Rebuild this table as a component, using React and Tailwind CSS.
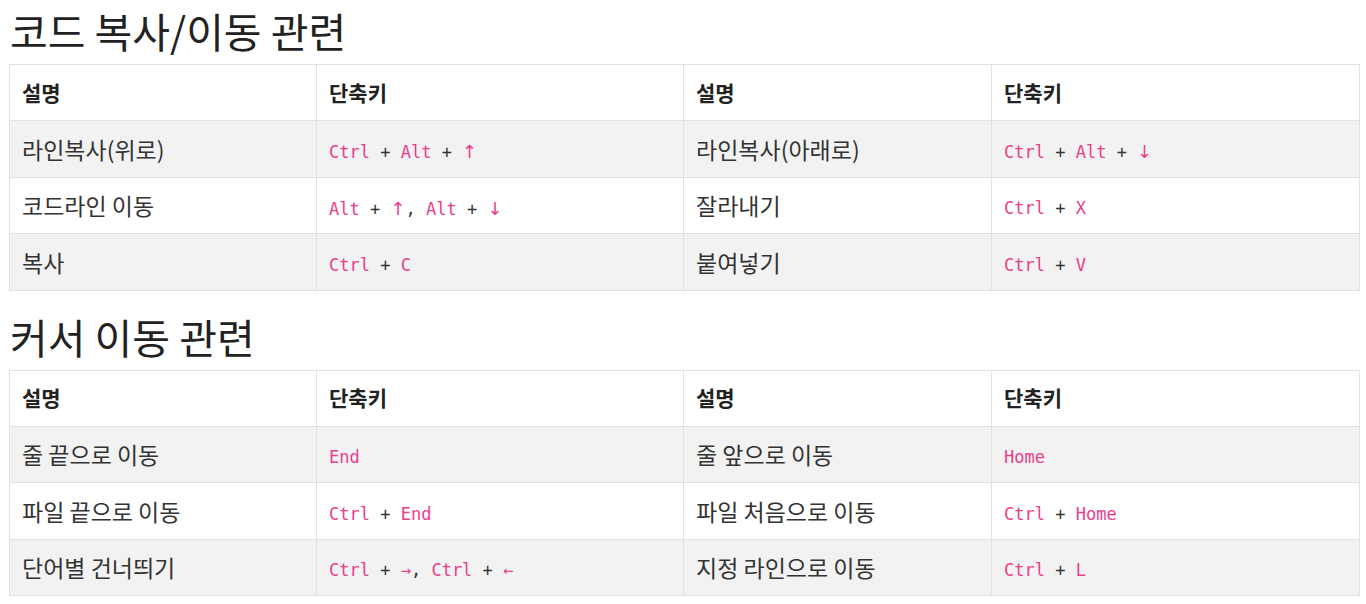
const sections = [
  {
    title: '코드 복사/이동 관련',
    rows: [
      ['라인복사(위로)', [['Ctrl'], ' + ', ['Alt'], ' + ', ['↑']], '라인복사(아래로)', [['Ctrl'], ' + ', ['Alt'], ' + ', ['↓']]],
      ['코드라인 이동', [['Alt'], ' + ', ['↑'], ', ', ['Alt'], ' + ', ['↓']], '잘라내기', [['Ctrl'], ' + ', ['X']]],
      ['복사', [['Ctrl'], ' + ', ['C']], '붙여넣기', [['Ctrl'], ' + ', ['V']]],
    ],
  },
  {
    title: '커서 이동 관련',
    rows: [
      ['줄 끝으로 이동', [['End']], '줄 앞으로 이동', [['Home']]],
      ['파일 끝으로 이동', [['Ctrl'], ' + ', ['End']], '파일 처음으로 이동', [['Ctrl'], ' + ', ['Home']]],
      ['단어별 건너띄기', [['Ctrl'], ' + ', ['→'], ', ', ['Ctrl'], ' + ', ['←']], '지정 라인으로 이동', [['Ctrl'], ' + ', ['L']]],
    ],
  },
]

const mono = "font-['DejaVu_Sans_Mono','Liberation_Mono',monospace]"

function Keys({ parts }) {
  return (
    <span className={`${mono} text-[17px] text-[#333]`}>
      {parts.map((p, i) => {
        if (!Array.isArray(p)) return <span key={i} className="whitespace-pre">{p}</span>
        // vertical arrows are drawn taller in the reference
        const tall = p[0] === '↑' || p[0] === '↓'
        return (
          <code
            key={i}
            className={`${tall ? "font-['DejaVu_Sans',sans-serif] text-[18px]" : `${mono} text-[17px]`} text-[#e83e8c]`}
          >
            {p[0]}
          </code>
        )
      })}
    </span>
  )
}

function ShortcutTable({ rows }) {
  const th = 'h-[56px] border border-[#dfe2e5] px-[12px] text-left align-middle text-[21px] font-bold text-[#222]'
  const td = 'h-[56.5px] border border-[#dfe2e5] px-[12px] align-middle'
  return (
    <table className="w-[1350px] table-fixed border-collapse">
      <colgroup>
        <col className="w-[307px]" />
        <col className="w-[367px]" />
        <col className="w-[308px]" />
        <col className="w-[368px]" />
      </colgroup>
      <thead>
        <tr className="bg-white">
          <th className={th}>설명</th>
          <th className={th}>단축키</th>
          <th className={th}>설명</th>
          <th className={th}>단축키</th>
        </tr>
      </thead>
      <tbody>
        {rows.map((r, i) => (
          <tr key={i} className={i % 2 === 0 ? 'bg-[#f2f2f2]' : 'bg-white'}>
            <td className={`${td} text-[23px] text-[#333]`}>{r[0]}</td>
            <td className={`${td} pt-[6px]`}><Keys parts={r[1]} /></td>
            <td className={`${td} text-[23px] text-[#333]`}>{r[2]}</td>
            <td className={`${td} pt-[6px]`}><Keys parts={r[3]} /></td>
          </tr>
        ))}
      </tbody>
    </table>
  )
}

export default function App() {
  return (
    <main className="min-h-screen bg-white pl-[9px] font-['Noto_Sans_CJK_KR','Noto_Sans',sans-serif] text-[#222]">
      {sections.map((s, i) => (
        <section key={i} className={i > 0 ? 'mt-[15px]' : ''}>
          <h1 className="h-[64px] pl-[1px] pt-[4px] text-[41px] leading-[52px] font-normal">{s.title}</h1>
          <ShortcutTable rows={s.rows} />
        </section>
      ))}
    </main>
  )
}
